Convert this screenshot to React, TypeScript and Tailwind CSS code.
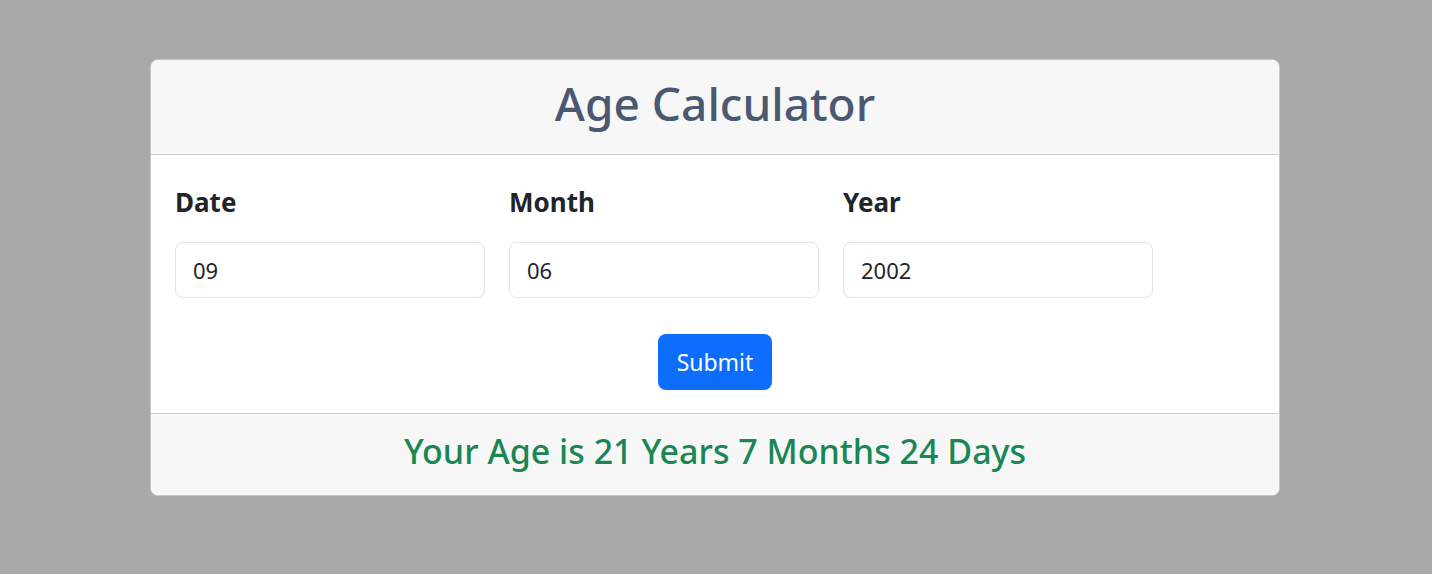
import React, { useState } from 'react';

const Field = ({ label, value, onChange }: { label: string; value: string; onChange: (v: string) => void }) => (
  <div className="flex w-[310px] flex-col">
    <label className="mb-[23px] text-[26px] font-bold leading-[34px] text-[#212529]">{label}</label>
    <input
      type="text"
      value={value}
      onChange={(e) => onChange(e.target.value)}
      className="h-[56px] w-full rounded-[8px] border border-[#dee2e6] bg-white px-[17px] text-[22px] text-[#212529] outline-none"
    />
  </div>
);

export default function App() {
  const [date, setDate] = useState('09');
  const [month, setMonth] = useState('06');
  const [year, setYear] = useState('2002');

  return (
    <div className="min-h-[574px] bg-[#a9a9a9] pt-[59px] font-['Noto_Sans',sans-serif]">
      <div className="ml-[150px] w-[1130px] overflow-hidden rounded-[8px] border border-[#c8c8c8] bg-white">
        <div className="flex h-[95px] items-center justify-center border-b border-[#cfcfcf] bg-[#f7f7f7] pb-[8px]">
          <h1 className="text-[46px] font-medium leading-none text-[#4a5870]">Age Calculator</h1>
        </div>

        <div className="px-[24px] pt-[30px] pb-[23px]">
          <div className="flex gap-[24px]">
            <Field label="Date" value={date} onChange={setDate} />
            <Field label="Month" value={month} onChange={setMonth} />
            <Field label="Year" value={year} onChange={setYear} />
          </div>
          <div className="mt-[36px] flex justify-center">
            <button
              type="button"
              className="h-[56px] w-[114px] rounded-[8px] bg-[#0d6efd] text-[23px] text-white"
            >
              Submit
            </button>
          </div>
        </div>

        <div className="flex h-[82px] items-center justify-center border-t border-[#cfcfcf] bg-[#f7f7f7] pb-[8px]">
          <h3 className="text-[34px] font-medium leading-none text-[#198754]">Your Age is 21 Years 7 Months 24 Days</h3>
        </div>
      </div>
    </div>
  );
}
